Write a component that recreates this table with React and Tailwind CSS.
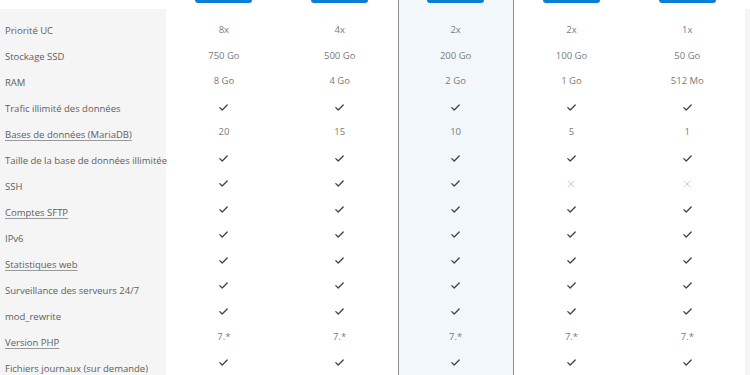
const features = [
  { label: 'Priorité UC', values: ['8x', '4x', '2x', '2x', '1x'] },
  { label: 'Stockage SSD', values: ['750 Go', '500 Go', '200 Go', '100 Go', '50 Go'] },
  { label: 'RAM', values: ['8 Go', '4 Go', '2 Go', '1 Go', '512 Mo'] },
  { label: 'Trafic illimité des données', values: [true, true, true, true, true] },
  { label: 'Bases de données (MariaDB)', link: true, values: ['20', '15', '10', '5', '1'] },
  { label: 'Taille de la base de données illimitée', values: [true, true, true, true, true] },
  { label: 'SSH', values: [true, true, true, false, false] },
  { label: 'Comptes SFTP', link: true, values: [true, true, true, true, true] },
  { label: 'IPv6', values: [true, true, true, true, true] },
  { label: 'Statistiques web', link: true, values: [true, true, true, true, true] },
  { label: 'Surveillance des serveurs 24/7', values: [true, true, true, true, true] },
  { label: 'mod_rewrite', values: [true, true, true, true, true] },
  { label: 'Version PHP', link: true, values: ['7.*', '7.*', '7.*', '7.*', '7.*'] },
  { label: 'Fichiers journaux (sur demande)', values: [true, true, true, true, true] },
];

const plans = [0, 1, 2, 3, 4];

function Check() {
  return (
    <svg width="9" height="7" viewBox="0 0 9 7" fill="none">
      <polyline points="0.8,3.6 3.2,6 8.2,1" stroke="#444" strokeWidth="1.3" strokeLinecap="round" strokeLinejoin="round" />
    </svg>
  );
}

function Cross() {
  return (
    <svg width="8" height="8" viewBox="0 0 8 8" fill="none">
      <path d="M1 1L7 7M7 1L1 7" stroke="#cfcfcf" strokeWidth="1" strokeLinecap="round" />
    </svg>
  );
}

function Cell({ v }) {
  if (v === true) return <Check />;
  if (v === false) return <Cross />;
  return <span>{v}</span>;
}

export default function App() {
  return (
    <div className="w-[750px] h-[375px] overflow-hidden bg-white flex text-[9.5px] text-[#7a7a7a]" style={{ fontFamily: '"Open Sans", "Noto Sans", sans-serif' }}>
      <div className="w-[166px] shrink-0 mt-[9px] bg-[#f5f5f5] pt-[9px]">
        {features.map((f) => (
          <div key={f.label} className="h-[26px] flex items-center pl-[5px] text-[#5e5e5e] whitespace-nowrap">
            <span className={f.link ? 'underline decoration-[#999] underline-offset-2' : ''}>{f.label}</span>
          </div>
        ))}
      </div>
      {plans.map((p) => (
        <div
          key={p}
          className={
            p === 2
              ? 'w-[116px] shrink-0 flex flex-col bg-[#f2f7fc] border-x border-[#8f8f8f]'
              : 'w-[115.8px] shrink-0 flex flex-col'
          }
        >
          <div className="h-[18px] flex justify-center">
            <div className="w-[57px] h-[3px] rounded-b-[4px] bg-[#0b7dd4]" />
          </div>
          {features.map((f) => (
            <div key={f.label} className="h-[26px] flex items-center justify-center">
              <Cell v={f.values[p]} />
            </div>
          ))}
        </div>
      ))}
      <div className="flex-1 mt-[9px] bg-[#f5f5f5]" />
    </div>
  );
}
